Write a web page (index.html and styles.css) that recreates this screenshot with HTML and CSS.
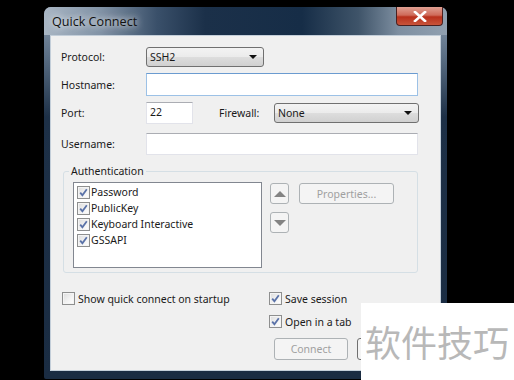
FILE: index.html
```html
<!DOCTYPE html>
<html lang="en">
<head>
    <meta charset="UTF-8">
    <title>Quick Connect</title>
    <link rel="stylesheet" href="styles.css">
</head>
<body>

    <div class="window">
        <div class="titlebar">
            <span class="title">Quick Connect</span>
            <span class="close-btn">
                <svg width="14" height="11" viewBox="0 0 14 11"><path d="M2 1 L12 10 M12 1 L2 10" stroke="#fff" stroke-width="2.6" stroke-linecap="square"/></svg>
            </span>
        </div>

        <div class="client">
            <div class="row row-protocol">
                <label>Protocol:</label>
                <div class="select select-protocol">SSH2<span class="caret"></span></div>
            </div>

            <div class="row row-host">
                <label>Hostname:</label>
                <div class="input input-wide focused"></div>
            </div>

            <div class="row row-port">
                <label>Port:</label>
                <div class="input input-port">22</div>
                <label class="firewall-label">Firewall:</label>
                <div class="select select-firewall">None<span class="caret"></span></div>
            </div>

            <div class="row row-user">
                <label>Username:</label>
                <div class="input input-wide"></div>
            </div>

            <fieldset class="group">
                <legend>Authentication</legend>
                <div class="auth">
                    <div class="listbox">
                        <div class="list-item"><span class="check on"></span>Password</div>
                        <div class="list-item"><span class="check on"></span>PublicKey</div>
                        <div class="list-item"><span class="check on"></span>Keyboard Interactive</div>
                        <div class="list-item"><span class="check on"></span>GSSAPI</div>
                    </div>
                    <div class="arrows">
                        <button class="arrow-btn"><span class="tri-up"></span></button>
                        <button class="arrow-btn"><span class="tri-down"></span></button>
                    </div>
                    <button class="btn btn-props" disabled>Properties...</button>
                </div>
            </fieldset>

            <div class="options">
                <div class="option"><span class="check"></span>Show quick connect on startup</div>
                <div class="option"><span class="check on"></span>Save session</div>
                <div class="option"></div>
                <div class="option"><span class="check on"></span>Open in a tab</div>
            </div>

            <div class="buttons">
                <button class="btn btn-main" disabled>Connect</button>
                <button class="btn btn-main btn-cancel"></button>
            </div>
        </div>
    </div>

    <div class="watermark">软件技巧</div>

</body>
</html>
```

FILE: styles.css
```css
body {
    margin: 0;
    background: #000;
    font-family: "Noto Sans", sans-serif;
    font-size: 10.5px;
    color: #1a1a1a;
}
.window {
    margin: 7px 0 0 44px;
    width: 403px;
    height: 372px;
    box-sizing: border-box;
    padding: 0 6px 8px 6px;
    border-radius: 7px 7px 2px 2px;
    background: linear-gradient(to bottom, #8d9db0 0, #5a6e84 50px, #1d3047 110px, #1a2c42 100%);
    display: flex;
    flex-direction: column;
}
.titlebar {
    height: 28px;
    margin: 0 -6px;
    padding: 0 6px;
    border-radius: 7px 7px 0 0;
    background: linear-gradient(to right, #a9b6c4 0%, #8293a6 14%, #3a506a 28%, #1b3049 40%, #162d47 64%, #3f5469 78%, #7e8fa1 88%, #91a0b0 100%);
    display: flex;
    align-items: center;
    position: relative;
}
.title {
    font-family: "Open Sans", sans-serif;
    font-size: 12.6px;
    padding-left: 2px;
    color: #111;
    text-shadow: 0 0 6px rgba(255, 255, 255, 0.9), 0 0 10px rgba(255, 255, 255, 0.6);
}
.close-btn {
    position: absolute;
    top: 0;
    right: 4px;
    width: 47px;
    height: 19px;
    box-sizing: border-box;
    border: 1px solid #4a2020;
    border-top: none;
    border-radius: 0 0 4px 4px;
    background: linear-gradient(to bottom, #e0a093 0%, #cf6b5a 45%, #b8301c 55%, #c9553b 100%);
    display: flex;
    align-items: center;
    justify-content: center;
}
.client {
    flex: 1;
    background: #f0f0f0;
    border: 1px solid #c3ced9;
    padding: 11px 0 0 10px;
}
.row {
    display: flex;
    align-items: center;
}
.row label {
    width: 85px;
}
.row-protocol {
    height: 20px;
}
.row-host {
    height: 23px;
    margin-top: 6px;
}
.row-port {
    height: 22px;
    margin-top: 6px;
}
.row-user {
    height: 22px;
    margin-top: 9px;
}
.select {
    position: relative;
    box-sizing: border-box;
    height: 20px;
    border: 1px solid #707070;
    border-radius: 3px;
    background: linear-gradient(to bottom, #f3f3f3 0%, #ebebeb 50%, #dddddd 51%, #d0d0d0 100%);
    padding-left: 3px;
    line-height: 18px;
}
.select-protocol {
    width: 118px;
}
.select-firewall {
    width: 145px;
}
.caret {
    position: absolute;
    right: 6px;
    top: 7px;
    border-left: 4px solid transparent;
    border-right: 4px solid transparent;
    border-top: 4px solid #111;
}
.input {
    box-sizing: border-box;
    height: 100%;
    background: #fff;
    border: 1px solid #e2e3ea;
    border-top-color: #abadb3;
    padding: 2px 3px;
    line-height: 14px;
}
.input-wide {
    width: 272px;
}
.input-port {
    width: 47px;
}
.focused {
    border-color: #9cc1e6;
    border-top-color: #6b9bd0;
}
.firewall-label {
    margin-left: 26px;
    width: 55px !important;
}
.group {
    margin: 8px 0 0 2px;
    width: 355px;
    box-sizing: border-box;
    height: 110px;
    border: 1px solid #d5dfe5;
    border-radius: 3px;
    padding: 3px 9px 4px 9px;
}
.group legend {
    padding: 0 2px;
    margin-left: -4px;
    line-height: 16px;
}
.auth {
    display: flex;
    align-items: flex-start;
}
.listbox {
    width: 189px;
    height: 86px;
    box-sizing: border-box;
    background: #fff;
    border: 1px solid #828790;
    padding: 1px 3px;
}
.list-item {
    height: 16px;
    display: flex;
    align-items: center;
}
.check {
    width: 13px;
    height: 13px;
    box-sizing: border-box;
    border: 1px solid #8e8f8f;
    background: linear-gradient(135deg, #dcdcdc 0%, #f4f4f4 60%, #ffffff 100%);
    margin-right: 1px;
    flex: none;
    box-shadow: inset 0 0 0 1px #f4f4f4;
}
.check.on {
    background: url("data:image/svg+xml,%3Csvg xmlns='http://www.w3.org/2000/svg' width='11' height='11'%3E%3Cpath d='M2.2 5.6 L4.4 8.2 L8.8 2.2' fill='none' stroke='%235a72a8' stroke-width='1.8'/%3E%3C/svg%3E") center no-repeat, linear-gradient(135deg, #dcdcdc 0%, #f4f4f4 60%, #ffffff 100%);
}
.arrows {
    display: flex;
    flex-direction: column;
    gap: 8px;
    margin: 1px 0 0 8px;
}
.arrow-btn, .btn {
    box-sizing: border-box;
    border: 1px solid #adb2b5;
    border-radius: 3px;
    background: #f4f4f4;
    font-family: inherit;
    font-size: inherit;
    padding: 0;
}
.arrow-btn {
    width: 19px;
    height: 21px;
    display: flex;
    align-items: center;
    justify-content: center;
}
.tri-up {
    border-left: 6px solid transparent;
    border-right: 6px solid transparent;
    border-bottom: 6px solid #838383;
}
.tri-down {
    border-left: 6px solid transparent;
    border-right: 6px solid transparent;
    border-top: 6px solid #838383;
}
.btn {
    height: 21px;
    color: #111;
}
.btn:disabled {
    color: #a0a0a0;
}
.btn-props {
    width: 95px;
    margin: 1px 0 0 10px;
}
.options {
    display: grid;
    grid-template-columns: 207px 120px;
    row-gap: 10px;
    margin: 19px 0 0 1px;
}
.option {
    height: 13px;
    display: flex;
    align-items: center;
}
.option .check {
    margin-right: 3px;
}
.buttons {
    display: flex;
    gap: 9px;
    margin: 10px 0 0 213px;
}
.btn-main {
    width: 74px;
    height: 22px;
}
.btn-cancel {
    border-color: #707070;
}
.watermark {
    position: absolute;
    left: 361px;
    top: 303px;
    width: 153px;
    height: 77px;
    background: #fff;
    color: #b8b8b8;
    font-family: "Noto Sans CJK SC", sans-serif;
    font-size: 36px;
    line-height: 77px;
    padding-left: 4px;
    box-sizing: border-box;
    white-space: nowrap;
}
```
